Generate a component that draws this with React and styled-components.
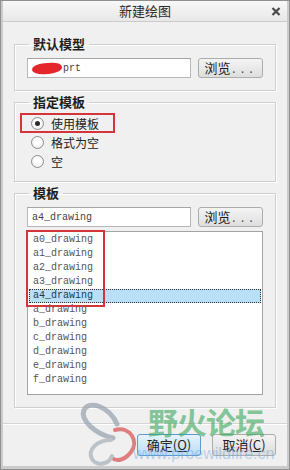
import React from 'react';
import styled, { createGlobalStyle } from 'styled-components';

const cjk = `"Noto Sans CJK SC", "Noto Sans", sans-serif`;
const mono = `"Liberation Mono", "DejaVu Sans Mono", monospace`;

const GlobalStyle = createGlobalStyle`
  html, body { margin: 0; padding: 0; background: #fff; }
  body { font-family: ${cjk}; }
`;

const Window = styled.div`
  position: relative;
  width: 290px;
  height: 470px;
  box-sizing: border-box;
  border: 1px solid #8f8f8f;
  padding: 0 2px 3px;
  background: #c9cbcd;
  display: flex;
  flex-direction: column;
  overflow: hidden;
`;

const TitleBar = styled.div`
  flex: none;
  height: 20px;
  display: grid;
  grid-template-columns: 1fr auto 1fr;
  align-items: center;
  background: linear-gradient(#f8f8f8, #e8e8e8);
  border-bottom: 1px solid #cbcbcb;
`;

const Title = styled.div`
  grid-column: 2;
  font-size: 13px;
  line-height: 20px;
  color: #2a2a2a;
`;

const Close = styled.svg`
  grid-column: 3;
  justify-self: end;
  margin-right: 6px;
  margin-top: 1px;
`;

const Client = styled.div`
  flex: 1;
  display: flex;
  flex-direction: column;
  background: #f0f0f0;
`;

const Body = styled.div`
  padding: 14px 11px 0;
  display: flex;
  flex-direction: column;
`;

const Group = styled.fieldset`
  margin: ${p => (p.$first ? '0' : '3px')} 0 0;
  padding: 0 12px ${p => p.$bottom || 12}px;
  min-width: 0;
  border: 1px solid #cfcfcf;
  box-shadow: 1px 1px 0 #fff, inset 1px 1px 0 #fff;
`;

const Legend = styled.legend`
  margin-left: 2px;
  padding: 0 4px;
  font-size: 13px;
  font-weight: bold;
  line-height: 16px;
  color: #1e1e1e;
`;

const FieldRow = styled.div`
  display: flex;
  gap: 7px;
  margin-top: 6px;
`;

const TextBox = styled.div`
  flex: 1;
  height: 20px;
  box-sizing: border-box;
  border: 1px solid #b5b7bb;
  border-top-color: #a3a5a9;
  background: #fff;
  padding: 0 4px;
  display: flex;
  align-items: center;
  font-family: ${mono};
  font-size: 10px;
  color: #444;
`;

const Blot = styled.span`
  display: inline-block;
  width: 30px;
  height: 11px;
  margin-right: 1px;
  background: #e5262c;
  border-radius: 48% 40% 52% 46% / 60% 50% 60% 55%;
  transform: rotate(-4deg);
`;

const Browse = styled.button`
  width: 65px;
  height: 20px;
  padding: 0;
  border: 1px solid #acacac;
  border-radius: 3px;
  background: linear-gradient(#f4f4f4, #dedede);
  font-family: ${cjk};
  font-size: 13px;
  line-height: 18px;
  color: #1a1a1a;
`;

const Dots = styled.span`
  letter-spacing: 2px;
  font-family: ${mono};
  font-size: 11px;
  color: #444;
`;

const RadioList = styled.div`
  margin-top: 4px;
  display: flex;
  flex-direction: column;
`;

const RadioRow = styled.label`
  position: relative;
  height: 19px;
  display: flex;
  align-items: center;
  gap: 7px;
  padding-left: 4px;
  font-size: 12px;
  color: #222;

  &::before {
    content: '';
    display: ${p => (p.$marked ? 'block' : 'none')};
    position: absolute;
    left: -7px;
    top: -1px;
    width: 95px;
    height: 20px;
    box-sizing: border-box;
    border: 2px solid #d3353b;
  }
`;

const RadioDot = styled.span`
  width: 13px;
  height: 13px;
  box-sizing: border-box;
  border-radius: 50%;
  border: 1px solid #8b8d8f;
  background: radial-gradient(circle at 50% 40%, #fff 30%, #e2e2e2 100%);
  display: grid;
  place-items: center;

  &::after {
    content: '';
    display: ${p => (p.$checked ? 'block' : 'none')};
    width: 5px;
    height: 5px;
    border-radius: 50%;
    background: #2b2b2b;
  }
`;

const ListBox = styled.div`
  position: relative;
  margin-top: 4px;
  height: 164px;
  box-sizing: border-box;
  border: 1px solid #a3a3a3;
  background: #fff;
  padding: 1px;
  font-family: ${mono};
  font-size: 10px;
  color: #555;
`;

const ListItem = styled.div`
  height: 14px;
  line-height: 14px;
  padding-left: 4px;
  box-sizing: border-box;
  background: ${p => (p.$selected ? '#b8e1f8' : 'transparent')};
  outline: ${p => (p.$selected ? '1px dotted #333' : 'none')};
  outline-offset: -1px;
  color: ${p => (p.$selected ? '#1d3850' : '#555')};
`;

const ListMark = styled.div`
  position: absolute;
  left: -2px;
  top: -2px;
  width: 79px;
  height: 77px;
  box-sizing: border-box;
  border: 2px solid #d3353b;
  pointer-events: none;
`;

const Footer = styled.div`
  flex: 1;
  margin-top: 15px;
  border-top: 1px solid #d4d4d4;
  box-shadow: inset 0 1px 0 #fff;
  padding: 10px 11px 0;
  display: flex;
  justify-content: flex-end;
  align-items: flex-start;
  gap: 11px;
`;

const DialogButton = styled.button`
  width: 64px;
  height: 22px;
  padding: 0;
  border: 1px solid ${p => (p.$primary ? '#5c9bd1' : '#acacac')};
  border-radius: 3px;
  background: ${p =>
    p.$primary ? 'linear-gradient(#e6f3fd, #bcdcf6)' : 'linear-gradient(#f4f4f4, #dcdcdc)'};
  font-family: ${cjk};
  font-size: 13px;
  line-height: 20px;
  color: #222;
`;

const Logo = styled.svg`
  position: absolute;
  left: 76px;
  top: 397px;
  opacity: 0.75;
  pointer-events: none;
`;

const MarkText = styled.div`
  position: absolute;
  left: 147px;
  top: 404px;
  font-family: ${cjk};
  font-size: 30px;
  font-weight: bold;
  line-height: 32px;
  letter-spacing: -1px;
  color: rgba(58, 168, 92, 0.62);
  pointer-events: none;
`;

const MarkUrl = styled.div`
  position: absolute;
  left: 132px;
  top: 444px;
  font-family: "Liberation Sans", Arial, sans-serif;
  font-size: 16px;
  line-height: 18px;
  color: rgba(110, 165, 220, 0.45);
  pointer-events: none;
`;

const templates = [
  'a0_drawing', 'a1_drawing', 'a2_drawing', 'a3_drawing', 'a4_drawing',
  'a_drawing', 'b_drawing', 'c_drawing', 'd_drawing', 'e_drawing', 'f_drawing',
];

export default function App() {
  return (
    <>
      <GlobalStyle />
      <Window>
        <TitleBar>
          <Title>新建绘图</Title>
          <Close width="10" height="9" viewBox="0 0 10 9">
            <path d="M1.5 1 L8.5 8 M8.5 1 L1.5 8" stroke="#4a4a4a" strokeWidth="2.2" />
          </Close>
        </TitleBar>
        <Client>
          <Body>
            <Group $first>
              <Legend>默认模型</Legend>
              <FieldRow>
                <TextBox><Blot />prt</TextBox>
                <Browse>浏览<Dots>...</Dots></Browse>
              </FieldRow>
            </Group>

            <Group $bottom={10}>
              <Legend>指定模板</Legend>
              <RadioList>
                <RadioRow $marked><RadioDot $checked />使用模板</RadioRow>
                <RadioRow><RadioDot />格式为空</RadioRow>
                <RadioRow><RadioDot />空</RadioRow>
              </RadioList>
            </Group>

            <Group>
              <Legend>模板</Legend>
              <FieldRow>
                <TextBox>a4_drawing</TextBox>
                <Browse>浏览<Dots>...</Dots></Browse>
              </FieldRow>
              <ListBox>
                {templates.map(t => (
                  <ListItem key={t} $selected={t === 'a4_drawing'}>{t}</ListItem>
                ))}
                <ListMark />
              </ListBox>
            </Group>
          </Body>

          <Footer>
            <DialogButton $primary>确定(<u>O</u>)</DialogButton>
            <DialogButton>取消(<u>C</u>)</DialogButton>
          </Footer>
        </Client>

        <Logo width="64" height="72" viewBox="0 0 64 72">
          <path d="M40 26 C32 8 12 2 7 12 C3 22 18 36 36 40" fill="none" stroke="#9aa6b0" strokeWidth="5" strokeLinecap="round" />
          <path d="M38 32 C54 28 62 44 54 54 C48 62 40 64 35 60" fill="none" stroke="#d9585a" strokeWidth="4" strokeLinecap="round" />
          <path d="M34 42 C20 42 10 52 15 61 C20 69 32 66 35 58" fill="none" stroke="#aab3bb" strokeWidth="4" strokeLinecap="round" />
        </Logo>
        <MarkText>野火论坛</MarkText>
        <MarkUrl>www.proewildfire.cn</MarkUrl>
      </Window>
    </>
  );
}
